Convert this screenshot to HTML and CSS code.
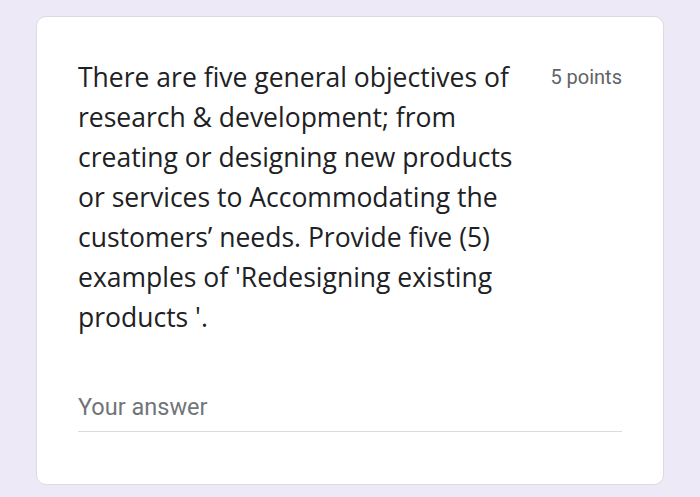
FILE: index.html
```html
<!DOCTYPE html>
<html>
<head>
<meta charset="utf-8">
<link rel="stylesheet" href="styles.css">
</head>
<body>
<div class="card">
  <div class="header">
    <div class="question">There are five general objectives of research &amp; development; from creating or designing new products or services to Accommodating the customers’ needs. Provide five (5) examples of 'Redesigning existing products '.</div>
    <div class="points">5 points</div>
  </div>
  <div class="answer">
    <div class="placeholder">Your answer</div>
    <div class="line"></div>
  </div>
</div>
</body>
</html>
```
FILE: styles.css
```css
html, body {
  margin: 0;
  padding: 0;
  background: #ede9f6;
  height: 100%;
}
body {
  padding: 16px 36px 12px 36px;
  box-sizing: border-box;
  font-family: "Open Sans", Roboto, sans-serif;
}
.card {
  background: #ffffff;
  border: 1px solid #dadce0;
  border-radius: 10px;
  height: 469px;
  box-sizing: border-box;
  padding: 40px 41px 0 41px;
  display: flex;
  flex-direction: column;
}
.header {
  display: flex;
  justify-content: space-between;
  align-items: flex-start;
}
.question {
  width: 445px;
  font-size: 26.5px;
  line-height: 40px;
  color: #202124;
}
.points {
  font-family: Roboto, sans-serif;
  font-size: 20px;
  color: #5f6368;
  line-height: 40px;
}
.answer {
  margin-top: 55px;
}
.placeholder {
  font-family: Roboto, sans-serif;
  font-size: 23.5px;
  color: #70757a;
  line-height: 30px;
}
.line {
  height: 1px;
  background: #dadce0;
  margin-top: 9px;
}
```
